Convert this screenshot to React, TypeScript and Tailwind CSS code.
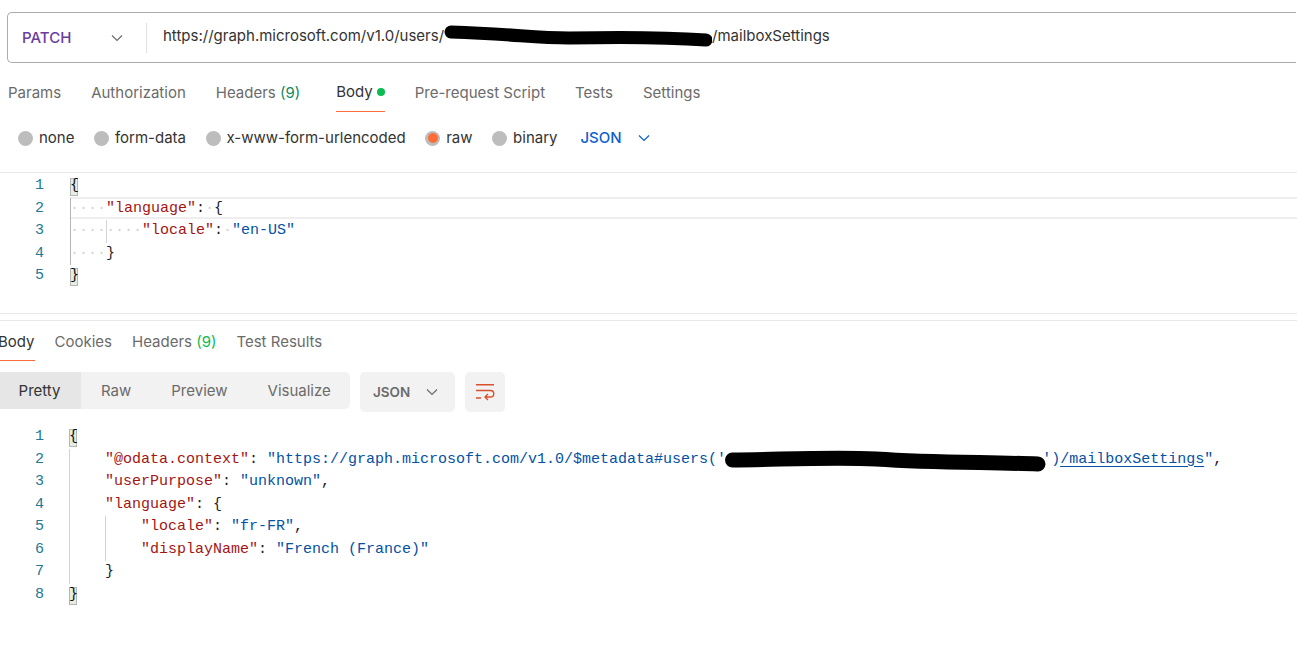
import React from "react";

const sans = "[font-family:Inter,'Liberation_Sans',sans-serif]";

function Dots({ n = 4 }: { n?: number }) {
  return <span className="text-[#d4d4d4]">{"·".repeat(n)}</span>;
}
const Key = ({ c }: { c: string }) => <span className="text-[#a31515]">{c}</span>;
const Str = ({ c }: { c: string }) => <span className="text-[#0451a5]">{c}</span>;
const P = ({ c }: { c: string }) => <span className="text-[#222]">{c}</span>;

function Match({ c }: { c: string }) {
  return (
    <span className="relative inline-block w-[9px] text-[#111]">
      <span className="absolute left-0 top-[3px] h-[18px] w-[8px] border border-[#b5b5b5] bg-[#e6eee2]" />
      <span className="relative">{c}</span>
    </span>
  );
}

function Guide({ line = false }: { line?: boolean }) {
  return <span className={`inline-block h-[22.5px] w-[36px] align-top ${line ? "shadow-[inset_1px_0_0_#d3d3d3]" : ""}`} />;
}

function Gutter({ count }: { count: number }) {
  return (
    <div className="w-[44px] shrink-0 text-right text-[#237893]">
      {Array.from({ length: count }, (_, i) => (
        <div key={i} className="h-[22.5px]">{i + 1}</div>
      ))}
    </div>
  );
}

function Row({ children, active }: { children?: React.ReactNode; active?: boolean }) {
  return (
    <div className={`h-[22.5px] whitespace-pre ${active ? "relative" : ""}`}>
      {active && (
        <span className="absolute left-0 right-0 -top-[1px] h-[22px] border-y-2 border-[#eeeeee]" />
      )}
      <span className="relative">{children}</span>
    </div>
  );
}

function Radio({ label, on }: { label: string; on?: boolean }) {
  return (
    <span className="flex items-center gap-[6px]">
      <span className="flex h-[15px] w-[15px] items-center justify-center rounded-full bg-[#bdbdbd]">
        {on && <span className="h-[10px] w-[10px] rounded-full bg-[#ff6c37]" />}
      </span>
      <span className="text-[#333]">{label}</span>
    </span>
  );
}

function Chevron({ className = "" }: { className?: string }) {
  return (
    <svg viewBox="0 0 12 8" className={`h-[8px] w-[12px] ${className}`} fill="none" stroke="currentColor" strokeWidth="1.2">
      <path d="M1 1.5 6 6.5 11 1.5" />
    </svg>
  );
}

export default function App() {
  return (
    <div className={`h-[652px] w-[1297px] overflow-hidden bg-white text-[15px] leading-[20px] ${sans}`}>
      <div className="h-[12px]" />
      <div className="ml-[7px] mr-px flex h-[51px] items-center rounded-l-[5px] border border-r-0 border-[#ababab] bg-white">
        <span className="ml-[14px] w-[89px] text-[15px] font-medium text-[#6a3d9f]">PATCH</span>
        <Chevron className="text-[#6b6b6b]" />
        <span className="ml-[23px] h-[30px] w-px bg-[#e2e2e2]" />
        <span className="-mt-[4px] ml-4 flex items-center whitespace-nowrap text-[#333]">
          https://graph.microsoft.com/v1.0/users/
          <svg viewBox="0 0 268 22" className="h-[22px] w-[268px]">
            <path d="M7 7 C70 9 90 13 125 13 C170 12 220 12 262 15" stroke="#000" strokeWidth="13" strokeLinecap="round" fill="none" />
          </svg>
          /mailboxSettings
        </span>
      </div>

      <div className="mt-[7px] flex h-[41px] items-start pl-[8px] pt-[13px] text-[#6b6b6b]">
        <span>Params</span>
        <span className="ml-[30px]">Authorization</span>
        <span className="ml-[30px]">Headers <span className="text-[#0f8a5f]">(9)</span></span>
        <span className="-mt-[13px] ml-[36px] flex h-[42px] items-center gap-[4px] border-b border-[#ff6c37] pt-[3px] text-[#333]">
          Body<span className="h-[8px] w-[8px] rounded-full bg-[#0cbb52]" />
        </span>
        <span className="ml-[30px]">Pre-request Script</span>
        <span className="ml-[30px]">Tests</span>
        <span className="ml-[30px]">Settings</span>
      </div>

      <div className="mt-[17px] flex h-[20px] items-center pl-[18px]">
        <div className="flex items-center gap-[19.5px]">
          <Radio label="none" />
          <Radio label="form-data" />
          <Radio label="x-www-form-urlencoded" />
          <Radio label="raw" on />
          <Radio label="binary" />
        </div>
        <span className="ml-[23px] font-medium text-[#0d5fd0]">JSON</span>
        <Chevron className="ml-[16px] text-[#0d5fd0]" />
      </div>

      <div className="mt-[24px] flex h-[141px] border-t border-[#e8e8e8] pt-[2px] font-['Liberation_Mono',monospace] text-[15px] leading-[22.5px]">
        <Gutter count={5} />
        <div className="ml-[26px] flex-1">
          <Row><Match c="{" /></Row>
          <Row active><span className="inline-block shadow-[inset_1px_0_0_#b5b5b5]"><Dots /></span><Key c={'"language"'} /><P c=":" /><Dots n={1} /><P c="{" /></Row>
          <Row><span className="inline-block h-[22.5px] align-top shadow-[inset_1px_0_0_#b5b5b5]"><Dots /></span><span className="inline-block h-[22.5px] align-top shadow-[inset_1px_0_0_#d3d3d3]"><Dots /></span><Key c={'"locale"'} /><P c=":" /><Dots n={1} /><Str c={'"en-US"'} /></Row>
          <Row><span className="inline-block h-[22.5px] align-top shadow-[inset_1px_0_0_#b5b5b5]"><Dots /></span><P c="}" /></Row>
          <Row><Match c="}" /></Row>
        </div>
      </div>

      <div className="h-[8px] border-y border-[#e8e8e8]" />

      <div className="-ml-[2px] flex h-[40px] gap-[20px] text-[#6b6b6b]">
        <span className="flex h-[40px] items-center border-b border-[#ff6c37] pt-[2px] text-[#333]">Body</span>
        <span className="flex h-[40px] items-center pt-[2px]">Cookies</span>
        <span className="flex h-[40px] items-center whitespace-pre pt-[2px]">Headers <span className="text-[#0cbb52]">(9)</span></span>
        <span className="flex h-[40px] items-center pt-[2px]">Test Results</span>
      </div>

      <div className="mt-[11px] flex h-[40px] items-start">
        <div className="flex h-[37px] w-[350px] items-center overflow-hidden rounded-r-[5px] bg-[#f2f2f2] text-[#6b6b6b]">
          <span className="flex h-full w-[81px] items-center justify-center bg-[#e6e6e6] pr-[2px] text-[#333]">Pretty</span>
          <span className="ml-[20px]">Raw</span>
          <span className="ml-[40px]">Preview</span>
          <span className="ml-[40px]">Visualize</span>
        </div>
        <div className="ml-[10px] flex h-[40px] w-[95px] items-center gap-[16px] rounded-[5px] bg-[#f2f2f2] pl-[13px] text-[13.5px] font-semibold text-[#6b6b6b]">
          <span className="w-[37px]">JSON</span>
          <Chevron />
        </div>
        <div className="ml-[10px] flex h-[40px] w-[40px] items-center justify-center rounded-[5px] bg-[#f2f2f2]">
          <svg viewBox="0 0 20 17" className="h-[17px] w-[20px]" fill="none" stroke="#d9512c" strokeWidth="1.4">
            <path d="M1 .75h18M1 6.5h14.5a3.2 3.2 0 0 1 0 6.5H10.5M13 10l-3 3 3 3M1 14h5" />
          </svg>
        </div>
      </div>

      <div className="mt-[13px] flex pt-[1px] font-['Liberation_Mono',monospace] text-[15px] leading-[22.5px]">
        <Gutter count={8} />
        <div className="ml-[25px] flex-1">
          <Row><Match c="{" /></Row>
          <div className="shadow-[inset_1px_0_0_#d3d3d3]">
            <Row><Guide /><Key c={'"@odata.context"'} /><P c=": " /><Str c={'"https://graph.microsoft.com/v1.0/$metadata#users(\''} /><svg viewBox="0 0 316 22" className="inline-block h-[22px] w-[316px] overflow-visible align-top"><path d="M6.5 11 C70 10 110 8 150 10 C210 14 260 13 312 15" stroke="#000" strokeWidth="15" strokeLinecap="round" fill="none" /></svg><Str c="')" /><span className="text-[#0451a5] underline underline-offset-[3px]">/mailboxSettings</span><Str c={'"'} /><P c="," /></Row>
            <Row><Guide /><Key c={'"userPurpose"'} /><P c=": " /><Str c={'"unknown"'} /><P c="," /></Row>
            <Row><Guide /><Key c={'"language"'} /><P c=": " /><P c="{" /></Row>
            <Row><Guide /><Guide line /><Key c={'"locale"'} /><P c=": " /><Str c={'"fr-FR"'} /><P c="," /></Row>
            <Row><Guide /><Guide line /><Key c={'"displayName"'} /><P c=": " /><Str c={'"French (France)"'} /></Row>
            <Row><Guide /><P c="}" /></Row>
          </div>
          <Row><Match c="}" /></Row>
        </div>
      </div>
    </div>
  );
}
